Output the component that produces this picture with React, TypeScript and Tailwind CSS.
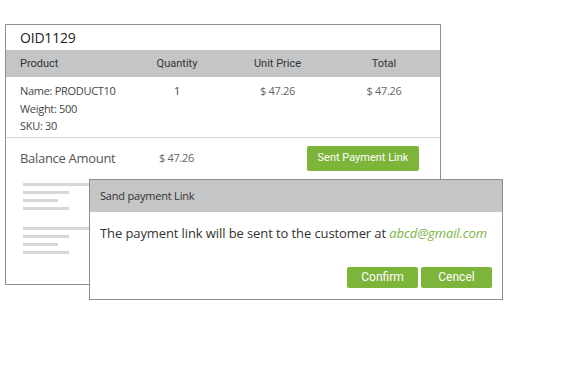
import React from 'react';

const rows = [
  { qty: '1', price: '$ 47.26', total: '$ 47.26' },
];

const Placeholder: React.FC = () => (
  <div className="flex flex-col gap-[5px]">
    <div className="h-[3px] w-[70px] bg-[#d5d7da]" />
    <div className="h-[3px] w-[46px] bg-[#d5d7da]" />
    <div className="h-[3px] w-[35px] bg-[#d5d7da]" />
    <div className="h-[3px] w-[46px] bg-[#d5d7da]" />
  </div>
);

const App: React.FC = () => {
  const body = { fontFamily: '"Open Sans", "Noto Sans", sans-serif' };
  const roboto = { fontFamily: 'Roboto, "Liberation Sans", sans-serif' };

  return (
    <div className="relative w-[583px] h-[385px] bg-white overflow-hidden" style={body}>
      <div className="ml-[5px] mt-[24px] w-[436px] h-[261px] border border-[#8c9096] bg-white">
        <div className="h-[25px] pl-[14px] flex items-center text-[14px] text-[#222] tracking-[-0.2px]">
          OID1129
        </div>

        <div
          className="h-[27px] bg-[#c4c5c7] grid grid-cols-[121px_100px_101px_1fr] items-center pt-[2px] text-[11px] text-[#333]"
          style={roboto}
        >
          <div className="pl-[14px]">Product</div>
          <div className="text-center">Quantity</div>
          <div className="text-center">Unit Price</div>
          <div className="text-center">Total</div>
        </div>

        {rows.map((r, i) => (
          <div
            key={i}
            className="grid grid-cols-[121px_100px_101px_1fr] pt-[5px] h-[61px] border-b border-[#d3d5d8] text-[11px] text-[#444] leading-[17.5px] tracking-[-0.3px]"
          >
            <div className="pl-[14px]">
              <div>Name: PRODUCT10</div>
              <div>Weight: 500</div>
              <div>SKU: 30</div>
            </div>
            <div className="text-center">{r.qty}</div>
            <div className="text-center text-[#666]">{r.price}</div>
            <div className="text-center text-[#666]">{r.total}</div>
          </div>
        ))}

        <div className="flex items-center h-[41px] pl-[14px] pr-[21px]">
          <div className="w-[139px] text-[13px] text-[#555] tracking-[-0.3px]">Balance Amount</div>
          <div className="text-[11px] text-[#666] tracking-[-0.3px]">$ 47.26</div>
          <button
            className="ml-auto h-[25px] w-[112px] rounded-[2px] bg-[#7db43a] text-white text-[11px]"
            style={roboto}
          >
            Sent Payment Link
          </button>
        </div>

        <div className="pl-[17px] pt-[4px] flex flex-col gap-[17px]">
          <Placeholder />
          <Placeholder />
        </div>
      </div>

      <div className="absolute left-[89px] top-[179px] w-[414px] h-[121px] border border-[#8c9096] bg-white">
        <div className="h-[32px] bg-[#c4c5c7] flex items-center pl-[10px] text-[11px] text-[#333] tracking-[-0.2px]">
          Sand payment Link
        </div>
        <div className="pl-[10px] pt-[12px] text-[13px] text-[#333] tracking-[-0.1px]">
          The payment link will be sent to the customer at{' '}
          <span className="italic text-[#7cb342]">abcd@gmail.com</span>
        </div>
        <div className="flex justify-end gap-[3px] pr-[10px] mt-[23px]" style={roboto}>
          <button className="h-[21px] w-[71px] rounded-[2px] bg-[#7db43a] text-white text-[12px]">Confirm</button>
          <button className="h-[21px] w-[71px] rounded-[2px] bg-[#7db43a] text-white text-[12px]">Cencel</button>
        </div>
      </div>
    </div>
  );
};

export default App;
